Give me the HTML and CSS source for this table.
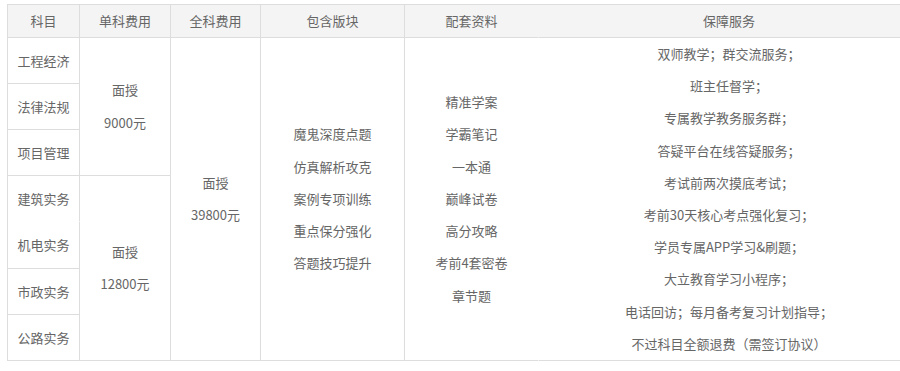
FILE: index.html
```html
<!DOCTYPE html>
<html lang="zh-CN">
<head>
<meta charset="utf-8">
<title>课程费用</title>
<link rel="stylesheet" href="styles.css">
</head>
<body>
<div class="wrap">
  <div class="grid">
    <div class="cell head">科目</div>
    <div class="cell head">单科费用</div>
    <div class="cell head">全科费用</div>
    <div class="cell head">包含版块</div>
    <div class="cell head noright">配套资料</div>
    <div class="cell head">保障服务</div>

    <div class="cell c1 r1">工程经济</div>
    <div class="cell c2 r1-3"><p>面授</p><p>9000元</p></div>
    <div class="cell c3 r1-7"><p>面授</p><p>39800元</p></div>
    <div class="cell c4 r1-7"><p>魔鬼深度点题</p><p>仿真解析攻克</p><p>案例专项训练</p><p>重点保分强化</p><p>答题技巧提升</p></div>
    <div class="cell c5 r1-7 noright"><p>精准学案</p><p>学霸笔记</p><p>一本通</p><p>巅峰试卷</p><p>高分攻略</p><p>考前4套密卷</p><p>章节题</p></div>
    <div class="cell c6 r1-7"><p>双师教学；群交流服务；</p><p>班主任督学；</p><p>专属教学教务服务群；</p><p>答疑平台在线答疑服务；</p><p>考试前两次摸底考试；</p><p>考前30天核心考点强化复习；</p><p>学员专属APP学习&amp;刷题；</p><p>大立教育学习小程序；</p><p>电话回访；每月备考复习计划指导；</p><p>不过科目全额退费（需签订协议）</p></div>
    <div class="cell c1 r2">法律法规</div>
    <div class="cell c1 r3">项目管理</div>
    <div class="cell c1 r4 nobottom">建筑实务</div>
    <div class="cell c2 r4-7"><p>面授</p><p>12800元</p></div>
    <div class="cell c1 r5">机电实务</div>
    <div class="cell c1 r6">市政实务</div>
    <div class="cell c1 r7">公路实务</div>
  </div>
</div>
</body>
</html>
```
FILE: styles.css
```css
html, body {
  margin: 0;
  padding: 0;
  background: #fff;
  overflow: hidden;
}
body {
  font-family: "Noto Sans CJK SC", "Noto Sans", sans-serif;
  font-size: 13px;
  color: #666;
}
.wrap {
  padding: 4px 0 0 7px;
  width: 900px;
  box-sizing: border-box;
  overflow: hidden;
}
.grid {
  display: grid;
  grid-template-columns: 72px 91px 90px 144px 134px 381px;
  grid-template-rows: 33px 46px 46px 46px 46px 47px 46px 46px;
  border-top: 1px solid #ddd;
  border-left: 1px solid #ddd;
  width: max-content;
}
.cell {
  border-right: 1px solid #ddd;
  border-bottom: 1px solid #ddd;
  display: flex;
  flex-direction: column;
  align-items: center;
  justify-content: center;
  text-align: center;
  line-height: 20px;
}
.cell p {
  margin: 0;
  line-height: 32.2px;
  white-space: nowrap;
}
.head {
  background: #f4f4f4;
}
.noright {
  border-right-color: transparent;
}
.nobottom {
  border-bottom-color: transparent;
}
.c1 { grid-column: 1; }
.c2 { grid-column: 2; }
.c3 { grid-column: 3; }
.c4 { grid-column: 4; }
.c5 { grid-column: 5; }
.c6 { grid-column: 6; }
.r1 { grid-row: 2; }
.r2 { grid-row: 3; }
.r3 { grid-row: 4; }
.r4 { grid-row: 5; }
.r5 { grid-row: 6; }
.r6 { grid-row: 7; }
.r7 { grid-row: 8; }
.r1-3 { grid-row: 2 / span 3; }
.r1-7 { grid-row: 2 / span 7; }
.r4-7 { grid-row: 5 / span 4; }
```
